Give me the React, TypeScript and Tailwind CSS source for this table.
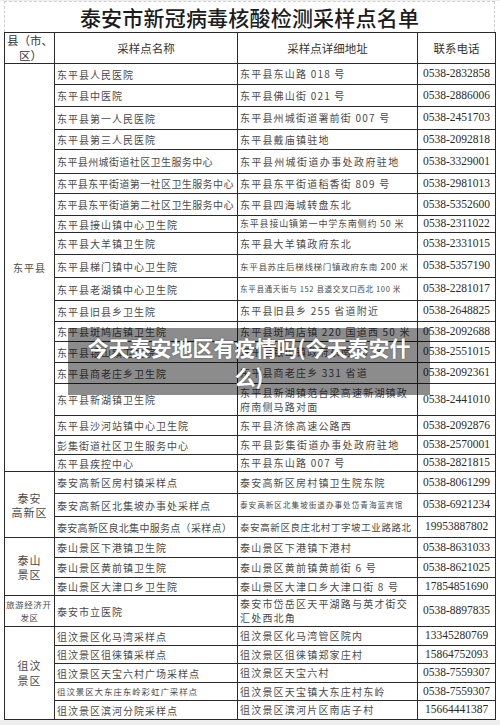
import React from 'react';

interface Row {
  name: string;
  addr: React.ReactNode;
  tel: string;
  h: string;
  nc?: string;
  ac?: string;
}

interface Group {
  label: React.ReactNode;
  rows: Row[];
}

const cjk = "font-['Noto_Sans_CJK_SC',sans-serif]";

// 采样点数据
const groups: Group[] = [
  {
    label: <span className="block text-[10px] leading-[13px] tracking-[1px]">东平县</span>,
    rows: [
      { name: '东平县人民医院', addr: '东平县东山路 018 号', tel: '0538-2832858', h: 'h-[21px]' },
      { name: '东平县中医院', addr: '东平县佛山街 021 号', tel: '0538-2886006', h: 'h-[22px]' },
      { name: '东平县第一人民医院', addr: '东平县州城街道署前街 007 号', tel: '0538-2451703', h: 'h-[23px]' },
      { name: '东平县第三人民医院', addr: '东平县戴庙镇驻地', tel: '0538-2092818', h: 'h-[20px]' },
      { name: '东平县州城街道社区卫生服务中心', addr: '东平县州城街道办事处政府驻地', tel: '0538-3329001', h: 'h-[24px]', nc: 'tracking-[0.4px]', ac: 'tracking-[1.4px]' },
      { name: '东平县东平街道第一社区卫生服务中心', addr: '东平县东平街道稻香街 809 号', tel: '0538-2981013', h: 'h-[20px]', nc: 'tracking-[0.4px]' },
      { name: '东平县东平街道第二社区卫生服务中心', addr: '东平县四海城转盘东北', tel: '0538-5352600', h: 'h-[22px]', nc: 'tracking-[0.4px]' },
      { name: '东平县接山镇中心卫生院', addr: '东平县接山镇第一中学东南侧约 50 米', tel: '0538-2311022', h: 'h-[17px]', ac: 'text-[9px] tracking-[0.8px]' },
      { name: '东平县大羊镇卫生院', addr: '东平县大羊镇政府东北', tel: '0538-2331015', h: 'h-[22px]' },
      { name: '东平县梯门镇中心卫生院', addr: '东平县苏庄后梯线梯门镇政府东南 200 米', tel: '0538-5357190', h: 'h-[23px]', ac: 'text-[8.5px] tracking-[0.7px]' },
      { name: '东平县老湖镇中心卫生院', addr: '东平县通天街与 152 县道交叉口西北 100 米', tel: '0538-2281017', h: 'h-[23px]', ac: 'text-[7.6px] tracking-[0.6px]' },
      { name: '东平县旧县乡卫生院', addr: '东平县旧县乡 255 省道附近', tel: '0538-2648825', h: 'h-[21px]' },
      { name: '东平县斑鸠店镇卫生院', addr: '东平县斑鸠店镇 220 国道西 50 米', tel: '0538-2092688', h: 'h-[20px]' },
      { name: '东平县银山镇卫生院', addr: '东平县银山镇政府东南 50 米', tel: '0538-2551015', h: 'h-[21px]' },
      { name: '东平县商老庄乡卫生院', addr: '东平县商老庄乡 331 省道', tel: '0538-2092361', h: 'h-[21px]' },
      {
        name: '东平县新湖镇卫生院',
        addr: (
          <>
            东平县新湖镇范台梁高速新湖镇政
            <br />
            府南侧马路对面
          </>
        ),
        tel: '0538-2441010',
        h: 'h-[32px]',
      },
      { name: '东平县沙河站镇中心卫生院', addr: '东平县济徐高速公路西', tel: '0538-2092876', h: 'h-[20px]' },
      { name: '彭集街道社区卫生服务中心', addr: '东平县彭集街道办事处政府驻地', tel: '0538-2570001', h: 'h-[19px]', ac: 'tracking-[1.4px]' },
      { name: '东平县疾控中心', addr: '东平县东山路 007 号', tel: '0538-2821815', h: 'h-[17px]' },
    ],
  },
  {
    label: (
      <span className="block text-[11px] leading-[14px] tracking-[1px]">
        泰安
        <br />
        高新区
      </span>
    ),
    rows: [
      { name: '泰安高新区房村镇采样点', addr: '泰安高新区房村镇卫生院东院', tel: '0538-8061299', h: 'h-[22px]' },
      { name: '泰安高新区北集坡办事处采样点', addr: '泰安高新区北集坡街道办事处岱青海蓝宾馆', tel: '0538-6921234', h: 'h-[23px]', ac: 'text-[7.6px] tracking-[1px]' },
      { name: '泰安高新区良北集中服务点（采样点）', addr: '泰安高新区良庄北村丁字坡工业路路北', tel: '19953887802', h: 'h-[21px]', nc: 'tracking-[0.3px]', ac: 'text-[9.5px] tracking-[0.6px]' },
    ],
  },
  {
    label: (
      <span className="block text-[11px] leading-[14px] tracking-[1px]">
        泰山
        <br />
        景区
      </span>
    ),
    rows: [
      { name: '泰山景区下港镇卫生院', addr: '泰山景区下港镇下港村', tel: '0538-8631033', h: 'h-[20px]' },
      { name: '泰山景区黄前镇卫生院', addr: '泰山景区黄前镇黄前街 6 号', tel: '0538-8621025', h: 'h-[20px]' },
      { name: '泰山景区大津口乡卫生院', addr: '泰山景区大津口乡大津口街 8 号', tel: '17854851690', h: 'h-[18px]' },
    ],
  },
  {
    label: (
      <span className="block text-[8.5px] leading-[13px] tracking-[0.6px]">
        <span className="block text-left">旅游经济开</span>
        <span className="block text-center">发区</span>
      </span>
    ),
    rows: [
      {
        name: '泰安市立医院',
        addr: (
          <>
            泰安市岱岳区天平湖路与英才街交
            <br />
            汇处西北角
          </>
        ),
        tel: '0538-8897835',
        h: 'h-[31px]',
      },
    ],
  },
  {
    label: (
      <span className="block text-[11px] leading-[15px] tracking-[1px]">
        徂汶
        <br />
        景区
      </span>
    ),
    rows: [
      { name: '徂汶景区化马湾采样点', addr: '徂汶景区化马湾管区院内', tel: '13345280769', h: 'h-[19px]' },
      { name: '徂汶景区徂徕镇采样点', addr: '徂汶景区徂徕镇郑家庄村', tel: '15864752093', h: 'h-[18px]' },
      { name: '徂汶景区天宝六村广场采样点', addr: '徂汶景区天宝六村', tel: '0538-7559307', h: 'h-[19px]' },
      { name: '徂汶景区大东庄东岭彩虹广采样点', addr: '徂汶景区天宝镇大东庄村东岭', tel: '0538-7559307', h: 'h-[18px]', nc: 'text-[8.5px] tracking-[0.9px]' },
      { name: '徂汶景区滨河分院采样点', addr: '徂汶景区滨河片区南店子村', tel: '15664441387', h: 'h-[19px]' },
    ],
  },
];

const cell = 'border border-[#2a2a2a] p-0 align-middle';

export default function App() {
  return (
    <div className={`relative w-[500px] h-[725px] overflow-hidden bg-[#eeeeee] text-[#4a4a4a] ${cjk}`}>
      <div className="bg-white">
        {/* 标题 */}
        <div className="ml-[4px] mr-[5px] mt-[1px] h-[31px] flex items-center justify-center border-x border-t border-dashed border-[#cfcfcf]">
          <h1 className="text-[21px] leading-none font-medium text-[#1c1c1c] tracking-[0.2px]">
            泰安市新冠病毒核酸检测采样点名单
          </h1>
        </div>

        <table className="ml-[4px] w-[491px] table-fixed border-collapse">
          <colgroup>
            <col className="w-[50px]" />
            <col className="w-[183px]" />
            <col className="w-[180px]" />
            <col className="w-[78px]" />
          </colgroup>
          <thead>
            <tr className="h-[31px] text-[11.5px] leading-[15px] text-[#333]">
              <th className={`${cell} font-normal pl-[2px]`}>
                <span className="block text-left">县（市、</span>
                <span className="block text-center">区）</span>
              </th>
              <th className={`${cell} font-normal text-center`}>采样点名称</th>
              <th className={`${cell} font-normal text-center`}>采样点详细地址</th>
              <th className={`${cell} font-normal text-center`}>联系电话</th>
            </tr>
          </thead>
          <tbody>
            {groups.map((g) =>
              g.rows.map((r, i) => (
                <tr key={r.tel + r.name} className={r.h}>
                  {i === 0 && (
                    <td rowSpan={g.rows.length} className={`${cell} text-center px-[1px]`}>
                      {g.label}
                    </td>
                  )}
                  <td className={`${cell} pl-[2px] whitespace-nowrap overflow-hidden leading-[13px] ${r.nc ?? 'text-[10px] tracking-[1px]'} ${r.nc && !r.nc.includes('text-') ? 'text-[10px]' : ''}`}>
                    {r.name}
                  </td>
                  <td className={`${cell} pl-[2px] whitespace-nowrap overflow-hidden leading-[14px] ${r.ac ?? 'text-[10px] tracking-[1.2px]'} ${r.ac && !r.ac.includes('text-') ? 'text-[10px]' : ''}`}>
                    {r.addr}
                  </td>
                  <td className={`${cell} text-center font-['Liberation_Serif',serif] text-[11.5px] leading-none text-[#2b2b2b]`}>
                    {r.tel}
                  </td>
                </tr>
              ))
            )}
          </tbody>
        </table>
      </div>

      {/* 图片标题遮罩 */}
      <div className="absolute left-[68px] top-[328px] w-[362px] h-[67px] bg-black/45 flex items-center justify-center px-[10px]">
        <p className="text-center text-white font-bold text-[21px] leading-[29px] [text-shadow:0_0_2px_rgba(0,0,0,0.4)]">
          今天泰安地区有疫情吗(今天泰安什么)
        </p>
      </div>
    </div>
  );
}
